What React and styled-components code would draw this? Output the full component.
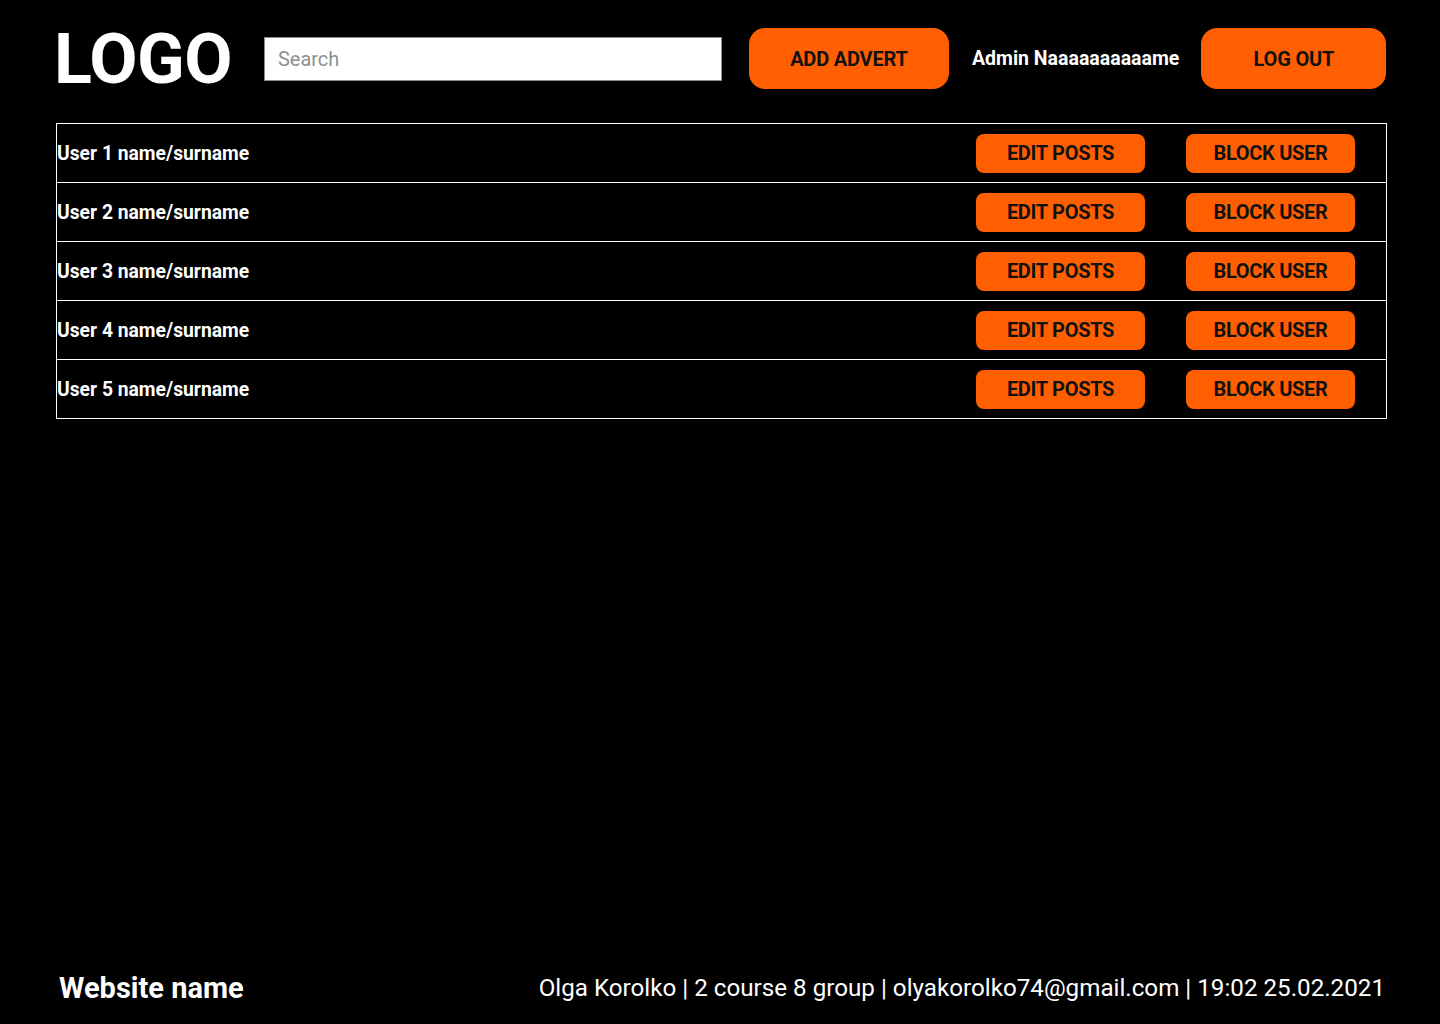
import React from 'react';
import styled, { createGlobalStyle } from 'styled-components';

const users = [1, 2, 3, 4, 5].map((n) => `User ${n} name/surname`);

function App() {
  return (
    <>
      <GlobalStyle />
      <Page>
        <Header>
          <Logo>LOGO</Logo>
          <Search placeholder="Search" />
          <HeaderButton $w={200} $ml={27}>ADD ADVERT</HeaderButton>
          <AdminName>Admin Naaaaaaaaaame</AdminName>
          <HeaderButton $w={185} $ml={0}>LOG OUT</HeaderButton>
        </Header>

        <UserTable>
          {users.map((name) => (
            <UserRow key={name}>
              <UserName>{name}</UserName>
              <Actions>
                <RowButton>EDIT POSTS</RowButton>
                <RowButton>BLOCK USER</RowButton>
              </Actions>
            </UserRow>
          ))}
        </UserTable>

        <Footer>
          <SiteName>Website name</SiteName>
          <Credits>
            Olga Korolko | 2 course 8 group | olyakorolko74@gmail.com | 19:02 25.02.2021
          </Credits>
        </Footer>
      </Page>
    </>
  );
}

const GlobalStyle = createGlobalStyle`
  html, body {
    margin: 0;
    background: #000;
  }
  body {
    font-family: Roboto, "Liberation Sans", sans-serif;
    color: #fff;
  }
`;

const Page = styled.div`
  min-height: 1024px;
  display: flex;
  flex-direction: column;
  padding: 0 53px 0 56px;
  box-sizing: border-box;
`;

const Header = styled.header`
  display: flex;
  align-items: center;
  height: 61px;
  margin-top: 28px;
`;

const Logo = styled.div`
  font-size: 70px;
  font-weight: 700;
  line-height: 1;
  margin-left: -2px;
  margin-top: 1px;
  letter-spacing: -0.5px;
`;

const Search = styled.input`
  width: 458px;
  height: 44px;
  box-sizing: border-box;
  margin-left: 32px;
  border: 1px solid #8a8a8a;
  background: #fff;
  padding: 0 13px;
  font-family: Roboto, sans-serif;
  font-size: 20px;
  outline: none;
  &::placeholder {
    color: #8f8f8f;
  }
`;

const HeaderButton = styled.button`
  width: ${(p) => p.$w}px;
  height: 61px;
  margin-left: ${(p) => p.$ml}px;
  border: none;
  border-radius: 16px;
  background: #ff5f00;
  color: #111;
  font-family: Roboto, sans-serif;
  font-size: 20px;
  font-weight: 700;
  letter-spacing: -0.2px;
  cursor: pointer;
`;

const AdminName = styled.div`
  margin: 0 22px 0 23px;
  font-size: 19.5px;
  font-weight: 700;
`;

const UserTable = styled.div`
  margin-top: 34px;
  border: 1px solid #fff;
`;

const UserRow = styled.div`
  display: flex;
  align-items: center;
  justify-content: space-between;
  height: 58px;
  & + & {
    border-top: 1px solid #fff;
  }
`;

const UserName = styled.div`
  font-size: 19.3px;
  font-weight: 700;
`;

const Actions = styled.div`
  display: flex;
  gap: 41px;
  margin-right: 31px;
`;

const RowButton = styled.button`
  width: 169px;
  height: 39px;
  border: none;
  border-radius: 8px;
  background: #ff5f00;
  color: #111;
  font-family: Roboto, sans-serif;
  font-size: 20px;
  font-weight: 700;
  letter-spacing: -0.3px;
  cursor: pointer;
`;

const Footer = styled.footer`
  margin-top: auto;
  display: flex;
  justify-content: space-between;
  align-items: center;
  padding: 0 2px 18px 3px;
  height: 36px;
`;

const SiteName = styled.div`
  font-size: 29px;
  font-weight: 700;
`;

const Credits = styled.div`
  font-size: 24.2px;
  font-weight: 400;
`;

export default App;
